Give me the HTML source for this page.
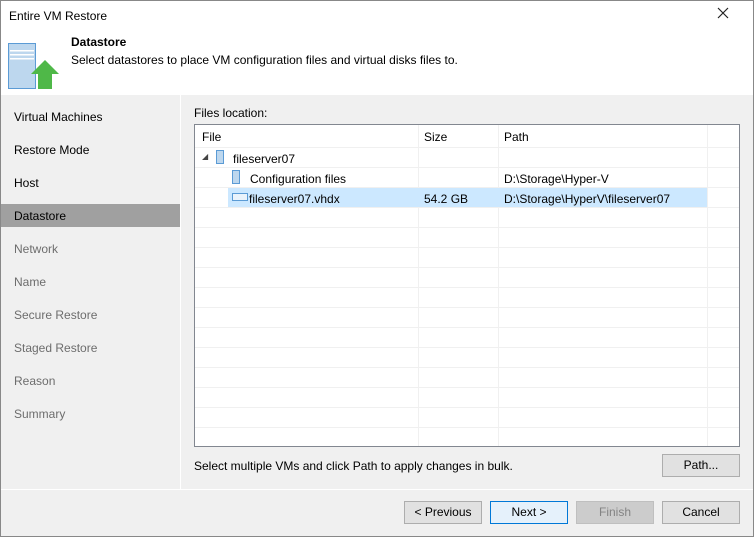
<!DOCTYPE html>
<html><head><style>
*{margin:0;padding:0;box-sizing:border-box}
body{width:754px;height:537px;overflow:hidden;font-family:"Liberation Sans",sans-serif;font-size:12px;color:#000;background:#f0f0f0;position:relative}
.abs{position:absolute}
.win{left:0;top:0;width:754px;height:537px;border:1px solid #888}
.nav{left:14px;font-size:12px}
.btn{position:absolute;height:23px;width:78px;border:1px solid #adadad;background:#e1e1e1;text-align:center;line-height:21px}
.row{position:absolute;left:0;width:544px;height:1px;background:#f0f0f0}
.vl{position:absolute;top:0;width:1px;height:321px;background:#f0f0f0}
</style></head><body>
<div class="abs" style="left:0;top:0;width:754px;height:95px;background:#fff"></div>
<div class="abs" style="left:9px;top:9px;font-size:12px">Entire VM Restore</div>
<svg class="abs" style="left:717px;top:7px" width="12" height="12"><path d="M1 1L11 11M11 1L1 11" stroke="#222" stroke-width="1.2"/></svg>
<svg class="abs" style="left:0;top:0" width="70" height="95">
<rect x="8.5" y="43.5" width="27" height="45" fill="#bdd7ee" stroke="#5b9bd5"/>
<rect x="10" y="50" width="24" height="1.5" fill="#fff"/><rect x="10" y="54" width="24" height="1.5" fill="#fff"/><rect x="10" y="58" width="24" height="1.5" fill="#fff"/>
<polygon points="45,60 59,74 52,74 52,89 38,89 38,74 31,74" fill="#4fb848"/>
</svg>
<div class="abs" style="left:71px;top:35px;font-weight:bold">Datastore</div>
<div class="abs" style="left:71px;top:53px">Select datastores to place VM configuration files and virtual disks files to.</div>
<div class="abs" style="left:180px;top:95px;width:1px;height:394px;background:#fff"></div>
<div class="abs" style="left:1px;top:204px;width:179px;height:23px;background:#a0a0a0"></div>
<div class="abs nav" style="top:110px">Virtual Machines</div>
<div class="abs nav" style="top:143px">Restore Mode</div>
<div class="abs nav" style="top:176px">Host</div>
<div class="abs nav" style="top:209px">Datastore</div>
<div class="abs nav" style="top:242px;color:#6d6d6d">Network</div>
<div class="abs nav" style="top:275px;color:#6d6d6d">Name</div>
<div class="abs nav" style="top:308px;color:#6d6d6d">Secure Restore</div>
<div class="abs nav" style="top:341px;color:#6d6d6d">Staged Restore</div>
<div class="abs nav" style="top:374px;color:#6d6d6d">Reason</div>
<div class="abs nav" style="top:407px;color:#6d6d6d">Summary</div>
<div class="abs" style="left:194px;top:106px">Files location:</div>
<div class="abs" style="left:194px;top:124px;width:546px;height:323px;border:1px solid #828790;background:#fff;overflow:hidden">
 <div class="vl" style="left:223px"></div><div class="vl" style="left:303px"></div><div class="vl" style="left:512px"></div>
 <div class="abs" style="left:33px;top:63px;width:479px;height:19px;background:#cce8ff"></div>
 <div class="row" style="top:22px"></div><div class="row" style="top:42px"></div><div class="row" style="top:62px"></div><div class="row" style="top:82px"></div><div class="row" style="top:102px"></div><div class="row" style="top:122px"></div><div class="row" style="top:142px"></div><div class="row" style="top:162px"></div><div class="row" style="top:182px"></div><div class="row" style="top:202px"></div><div class="row" style="top:222px"></div><div class="row" style="top:242px"></div><div class="row" style="top:262px"></div><div class="row" style="top:282px"></div><div class="row" style="top:302px"></div>
 <div class="abs" style="left:7px;top:5px">File</div>
 <div class="abs" style="left:229px;top:5px">Size</div>
 <div class="abs" style="left:309px;top:5px">Path</div>
 <div class="abs" style="left:7px;top:27px;font-size:8px;color:#444">◢</div>
 <div class="abs" style="left:21px;top:25px;width:8px;height:14px;border:1px solid #5b9bd5;background:#bdd7ee"></div>
 <div class="abs" style="left:38px;top:27px">fileserver07</div>
 <div class="abs" style="left:37px;top:45px;width:8px;height:14px;border:1px solid #5b9bd5;background:#bdd7ee"></div>
 <div class="abs" style="left:55px;top:47px">Configuration files</div>
 <div class="abs" style="left:309px;top:47px">D:\Storage\Hyper-V</div>
 <div class="abs" style="left:37px;top:68px;width:16px;height:8px;border:1px solid #5b9bd5;background:#eaf3fb"></div>
 <div class="abs" style="left:54px;top:67px">fileserver07.vhdx</div>
 <div class="abs" style="left:229px;top:67px">54.2 GB</div>
 <div class="abs" style="left:309px;top:67px">D:\Storage\HyperV\fileserver07</div>
</div>
<div class="abs" style="left:194px;top:459px">Select multiple VMs and click Path to apply changes in bulk.</div>
<div class="btn" style="left:662px;top:454px">Path...</div>
<div class="abs" style="left:1px;top:489px;width:752px;height:1px;background:#fff"></div>
<div class="btn" style="left:404px;top:501px">&lt; Previous</div>
<div class="btn" style="left:490px;top:501px;border-color:#0078d7;background:#e5f1fb">Next &gt;</div>
<div class="btn" style="left:576px;top:501px;border-color:#bfbfbf;background:#cccccc;color:#838383">Finish</div>
<div class="btn" style="left:662px;top:501px">Cancel</div>
<div class="abs win"></div>
</body></html>
